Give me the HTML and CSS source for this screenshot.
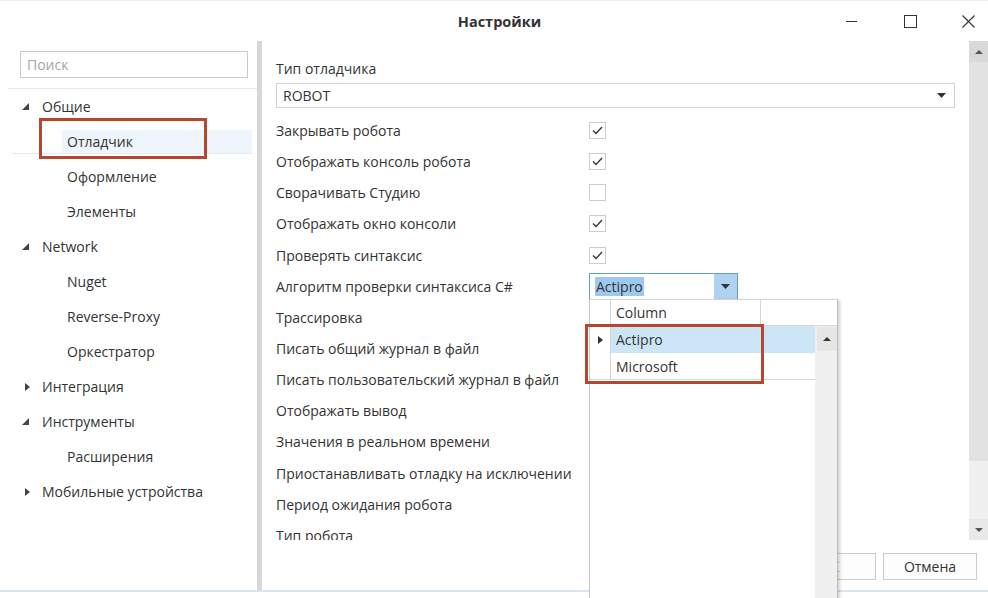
FILE: index.html
```html
<!DOCTYPE html>
<html lang="ru">
<head>
<meta charset="utf-8">
<title>Настройки</title>
<link rel="stylesheet" href="styles.css">
</head>
<body>
<div class="window">
  <header class="titlebar">
    <div class="title">Настройки</div>
    <div class="controls">
      <div class="ctl"><svg width="12" height="12" viewBox="0 0 12 12"><line x1="0" y1="6.5" x2="11" y2="6.5" stroke="#333" stroke-width="1"/></svg></div>
      <div class="ctl"><svg width="13" height="13" viewBox="0 0 13 13"><rect x="0.5" y="0.5" width="12" height="12" fill="none" stroke="#333" stroke-width="1"/></svg></div>
      <div class="ctl"><svg width="13" height="13" viewBox="0 0 13 13"><path d="M0.5 0.5 L12.5 12.5 M12.5 0.5 L0.5 12.5" stroke="#333" stroke-width="1.1"/></svg></div>
    </div>
  </header>
  <div class="main">
    <aside class="sidebar">
      <div class="search-wrap"><div class="search">Поиск</div></div>
      <div class="tree">
        <div class="node l1"><span class="twisty"><svg width="7" height="7" viewBox="0 0 7 7"><polygon points="7,0 7,7 0,7" fill="#444"/></svg></span>Общие</div>
        <div class="node l2 selected"><div class="sel-line"><div class="sel-label">Отладчик</div></div></div>
        <div class="node l2">Оформление</div>
        <div class="node l2">Элементы</div>
        <div class="node l1"><span class="twisty"><svg width="7" height="7" viewBox="0 0 7 7"><polygon points="7,0 7,7 0,7" fill="#444"/></svg></span>Network</div>
        <div class="node l2">Nuget</div>
        <div class="node l2">Reverse-Proxy</div>
        <div class="node l2">Оркестратор</div>
        <div class="node l1"><span class="twisty"><svg width="5" height="8" viewBox="0 0 5 8"><polygon points="0,0 5,4 0,8" fill="#444"/></svg></span>Интеграция</div>
        <div class="node l1"><span class="twisty"><svg width="7" height="7" viewBox="0 0 7 7"><polygon points="7,0 7,7 0,7" fill="#444"/></svg></span>Инструменты</div>
        <div class="node l2">Расширения</div>
        <div class="node l1"><span class="twisty"><svg width="5" height="8" viewBox="0 0 5 8"><polygon points="0,0 5,4 0,8" fill="#444"/></svg></span>Мобильные устройства</div>
      </div>
    </aside>
    <div class="splitter"></div>
    <section class="pane">
      <div class="pane-body">
        <div class="content">
          <div class="field-label">Тип отладчика</div>
          <div class="combo"><span>ROBOT</span><svg width="9" height="5" viewBox="0 0 9 5"><polygon points="0,0 9,0 4.5,5" fill="#333"/></svg></div>
          <div class="rows">
            <div class="row"><span class="row-label">Закрывать робота</span><span class="check"><svg width="15" height="15" viewBox="0 0 15 15"><polyline points="3,7.5 6,10.5 12,4" fill="none" stroke="#333" stroke-width="1.3"/></svg></span></div>
            <div class="row"><span class="row-label">Отображать консоль робота</span><span class="check"><svg width="15" height="15" viewBox="0 0 15 15"><polyline points="3,7.5 6,10.5 12,4" fill="none" stroke="#333" stroke-width="1.3"/></svg></span></div>
            <div class="row"><span class="row-label">Сворачивать Студию</span><span class="check"></span></div>
            <div class="row"><span class="row-label">Отображать окно консоли</span><span class="check"><svg width="15" height="15" viewBox="0 0 15 15"><polyline points="3,7.5 6,10.5 12,4" fill="none" stroke="#333" stroke-width="1.3"/></svg></span></div>
            <div class="row"><span class="row-label">Проверять синтаксис</span><span class="check"><svg width="15" height="15" viewBox="0 0 15 15"><polyline points="3,7.5 6,10.5 12,4" fill="none" stroke="#333" stroke-width="1.3"/></svg></span></div>
            <div class="row"><span class="row-label">Алгоритм проверки синтаксиса C#</span>
              <span class="combo-sm"><span class="sel-text">Actipro</span><span class="combo-btn"><svg width="9" height="5" viewBox="0 0 9 5"><polygon points="0,0 9,0 4.5,5" fill="#333"/></svg></span></span>
            </div>
            <div class="row"><span class="row-label">Трассировка</span></div>
            <div class="row"><span class="row-label">Писать общий журнал в файл</span></div>
            <div class="row"><span class="row-label">Писать пользовательский журнал в файл</span></div>
            <div class="row"><span class="row-label">Отображать вывод</span></div>
            <div class="row"><span class="row-label">Значения в реальном времени</span></div>
            <div class="row"><span class="row-label">Приостанавливать отладку на исключении</span></div>
            <div class="row"><span class="row-label">Период ожидания робота</span></div>
            <div class="row"><span class="row-label">Тип робота</span></div>
          </div>
        </div>
        <div class="vscroll">
          <div class="sb-btn up"><svg width="8" height="4" viewBox="0 0 8 4"><polygon points="0,4 8,4 4,0" fill="#555"/></svg></div>
          <div class="sb-thumb"></div>
          <div class="sb-track"></div>
          <div class="sb-btn down"><svg width="8" height="4" viewBox="0 0 8 4"><polygon points="0,0 8,0 4,4" fill="#555"/></svg></div>
        </div>
      </div>
      <footer class="buttons">
        <div class="btn">ОК</div>
        <div class="btn">Отмена</div>
      </footer>
    </section>
  </div>
  <div class="bottom-line"></div>
</div>

<div class="popup">
  <div class="p-head">
    <div class="rh"></div>
    <div class="col">Column</div>
  </div>
  <div class="p-body">
    <div class="p-grid">
      <div class="prow current"><div class="rh"><svg width="5" height="8" viewBox="0 0 5 8"><polygon points="0,0 5,4 0,8" fill="#333"/></svg></div><div class="cell">Actipro</div></div>
      <div class="prow last"><div class="rh"></div><div class="cell">Microsoft</div></div>
    </div>
    <div class="pscroll">
      <div class="psb-up"><svg width="8" height="4" viewBox="0 0 8 4"><polygon points="0,4 8,4 4,0" fill="#333"/></svg></div>
    </div>
  </div>
</div>

<div class="annot annot-tree"></div>
<div class="annot annot-grid"></div>
</body>
</html>
```

FILE: styles.css
```css
* { box-sizing: border-box; }
html, body { margin: 0; padding: 0; }
body {
  width: 988px;
  height: 598px;
  overflow: hidden;
  position: relative;
  background: #fff;
  font-family: "Open Sans", "Noto Sans", sans-serif;
  font-size: 14px;
  color: #333;
}

.window {
  height: 598px;
  display: flex;
  flex-direction: column;
  border-top: 1px solid #eaf0f6;
}

.titlebar {
  height: 40px;
  flex: none;
  display: grid;
  grid-template-columns: 1fr auto 1fr;
  align-items: center;
}
.title {
  grid-column: 2;
  font-weight: 700;
  font-size: 14.5px;
  color: #333;
  padding-left: 11px;
}
.controls {
  grid-column: 3;
  justify-self: end;
  display: flex;
  gap: 34px;
  padding-right: 8px;
}
.ctl {
  width: 24px;
  height: 24px;
  display: flex;
  align-items: center;
  justify-content: center;
}

.main {
  height: 549px;
  flex: none;
  display: flex;
}

.sidebar {
  width: 257px;
  flex: none;
}
.search-wrap {
  margin-left: 8px;
  padding: 10px 9px 10px 12px;
  border-bottom: 1px solid #e6e6e6;
}
.search {
  height: 27px;
  border: 1px solid #cacaca;
  padding-left: 6px;
  display: flex;
  align-items: center;
  color: #a5a5a5;
}

.node {
  height: 35px;
  display: flex;
  align-items: center;
  white-space: nowrap;
}
.node.l1 { padding-left: 22px; }
.node.l2 { padding-left: 67px; }
.twisty {
  width: 20px;
  display: flex;
  align-items: center;
}
.node.l1 .twisty svg[width="5"] { margin-left: 3px; }
.node.l2.selected {
  padding-left: 12px;
  padding-right: 5px;
}
.sel-line {
  flex: 1;
  height: 24px;
  display: flex;
  border-bottom: 1px solid #e4eaf0;
}
.sel-label {
  flex: 1;
  margin-left: 50px;
  padding-left: 5px;
  display: flex;
  align-items: center;
  background: #eef5fc;
}

.splitter {
  width: 5px;
  flex: none;
  background: #d7d7d7;
}

.pane {
  flex: 1;
  display: flex;
  flex-direction: column;
}
.pane-body {
  height: 499px;
  flex: none;
  display: flex;
}
.content {
  flex: 1;
  overflow: hidden;
  padding: 18px 14px 0 14px;
}
.field-label {
  height: 20px;
  line-height: 20px;
}
.combo {
  margin-top: 4px;
  height: 25px;
  border: 1px solid #d2d2d2;
  display: flex;
  align-items: center;
  justify-content: space-between;
  padding: 0 8px 0 6px;
}
.rows { margin-top: 7px; }
.row {
  height: 31.15px;
  display: flex;
  align-items: center;
}
.row-label {
  width: 313px;
  flex: none;
  white-space: nowrap;
}
.check {
  width: 17px;
  height: 17px;
  border: 1px solid #cdcdcd;
  display: flex;
  align-items: center;
  justify-content: center;
}
.combo-sm {
  width: 149px;
  height: 27px;
  border: 1px solid #5b9dd6;
  display: flex;
  align-items: center;
  padding-left: 5px;
}
.sel-text {
  background: #9ec9ee;
  line-height: 19px;
  padding: 0 1px;
}
.combo-btn {
  margin-left: auto;
  width: 23px;
  height: 100%;
  background: #b0d2f0;
  display: flex;
  align-items: center;
  justify-content: center;
}

.vscroll {
  width: 19px;
  flex: none;
  display: flex;
  flex-direction: column;
}
.sb-btn {
  height: 21px;
  flex: none;
  display: flex;
  align-items: center;
  justify-content: center;
}
.sb-btn.up { background: #d9d9d9; }
.sb-btn.down { background: #e9e9e9; }
.sb-thumb { height: 399px; flex: none; background: #e2e2e2; }
.sb-track { flex: 1; background: #f0f0f0; }

.buttons {
  flex: 1;
  display: flex;
  justify-content: flex-end;
  align-items: flex-start;
  gap: 7px;
  padding: 13px 11px 0 0;
}
.btn {
  width: 94px;
  height: 27px;
  border: 1px solid #cbcbcb;
  background: #fdfdfd;
  display: flex;
  align-items: center;
  justify-content: center;
}

.bottom-line {
  height: 2px;
  flex: none;
  background: #d9e5f1;
}

/* dropdown grid popup */
.popup {
  position: absolute;
  left: 589px;
  top: 299px;
  width: 249px;
  height: 300px;
  background: #fff;
  border-left: 1px solid #c8c8c8;
  border-right: 1px solid #bdbdbd;
  border-top: 1px solid #d4d4d4;
  box-shadow: 2px 1px 3px rgba(0, 0, 0, 0.18);
  display: flex;
  flex-direction: column;
}
.p-head {
  height: 26px;
  flex: none;
  display: flex;
  border-bottom: 1px solid #d6d6d6;
}
.rh {
  width: 21px;
  flex: none;
  border-right: 1px solid #d6d6d6;
  display: flex;
  align-items: center;
  justify-content: center;
}
.col {
  width: 150px;
  border-right: 1px solid #d6d6d6;
  padding-left: 5px;
  display: flex;
  align-items: center;
}
.p-body {
  flex: 1;
  display: flex;
}
.p-grid { flex: 1; }
.prow {
  height: 27px;
  display: flex;
}
.prow.last { border-bottom: 1px solid #d6d6d6; height: 27px; }
.cell {
  flex: 1;
  padding-left: 5px;
  display: flex;
  align-items: center;
}
.prow.current .cell { background: #cde6f7; }
.pscroll {
  width: 22px;
  flex: none;
  background: #f0f0f0;
  padding: 1px 0 0 2px;
}
.psb-up {
  height: 24px;
  background: #e6e6e6;
  display: flex;
  align-items: center;
  justify-content: center;
}

/* red annotation frames */
.annot {
  position: absolute;
  border: 3px solid #b5472f;
}
.annot-tree { left: 39px; top: 118px; width: 168px; height: 41px; }
.annot-grid { left: 585px; top: 324px; width: 179px; height: 60px; }
```
